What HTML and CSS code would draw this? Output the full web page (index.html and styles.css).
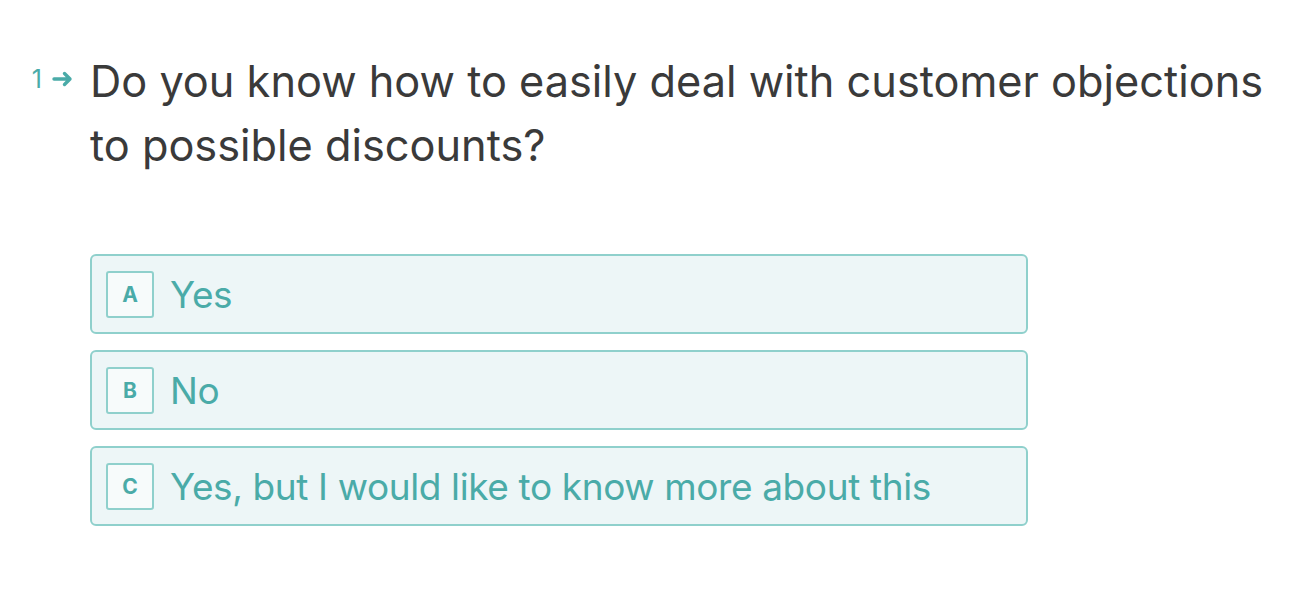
FILE: index.html
```html
<!DOCTYPE html>
<html>
<head>
<meta charset="utf-8">
<link rel="stylesheet" href="styles.css">
</head>
<body>
<div class="question">
  <div class="qhead">
    <div class="qnum"><span class="num">1</span><svg class="arrow" width="22" height="16" viewBox="0 0 22 16"><path d="M2 8h16M12.5 2.5L18 8l-5.5 5.5" fill="none" stroke="#4aaba8" stroke-width="3.4" stroke-linecap="round" stroke-linejoin="round"/></svg></div>
    <h1 class="qtext">Do you know how to easily deal with customer objections to possible discounts?</h1>
  </div>
  <div class="options">
    <div class="option"><span class="key">A</span><span class="label">Yes</span></div>
    <div class="option"><span class="key">B</span><span class="label">No</span></div>
    <div class="option"><span class="key">C</span><span class="label">Yes, but I would like to know more about this</span></div>
  </div>
</div>
</body>
</html>
```
FILE: styles.css
```css
html, body { margin: 0; padding: 0; background: #fff; }
body { font-family: Inter, "Noto Sans", sans-serif; }
.question { padding: 49px 0 0 0; }
.qhead { display: flex; align-items: flex-start; }
.qnum { width: 90px; height: 60px; flex: none; display: flex; justify-content: flex-end; align-items: center; gap: 10px; padding-right: 16px; box-sizing: border-box; color: #4aaba8; }
.num { font-size: 25px; line-height: 1; }
.arrow { display: block; }
.qtext { margin: 0; font-weight: 400; font-size: 43.3px; line-height: 64px; color: #3a3a3a; width: 1195px; letter-spacing: 0; }
.options { margin: 77px 0 0 90px; width: 938px; display: flex; flex-direction: column; gap: 16px; }
.option { display: flex; align-items: center; height: 80px; box-sizing: border-box; border: 2px solid #8fd0cc; border-radius: 6px; background: #edf6f7; padding: 0 14px; }
.key { width: 48px; height: 47px; box-sizing: border-box; border: 2px solid #8fd0cc; border-radius: 3px; background: #f7fbfb; display: flex; align-items: center; justify-content: center; font-size: 21px; font-weight: 700; color: #4aaba8; }
.label { margin-left: 16px; font-size: 37px; color: #4aaba8; letter-spacing: -0.38px; }
```
